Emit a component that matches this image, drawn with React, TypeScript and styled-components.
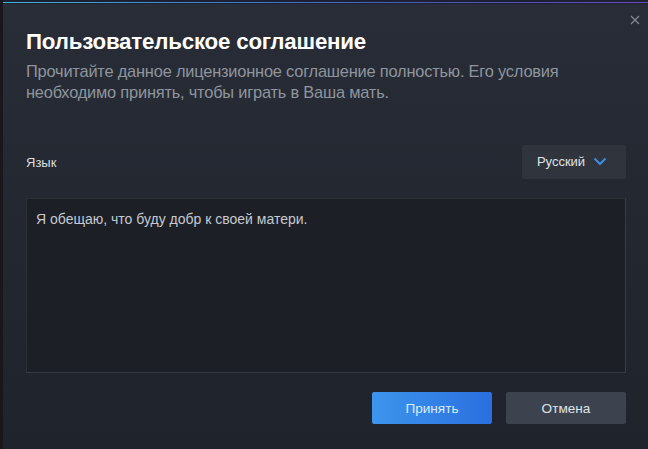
import React from "react";
import styled, { createGlobalStyle } from "styled-components";

const Global = createGlobalStyle`
  html, body { margin: 0; padding: 0; background: #1a1d24; }
  body { font-family: "Liberation Sans", Arial, sans-serif; }
  * { box-sizing: border-box; }
`;

const Dialog = styled.div`
  position: relative;
  width: 648px;
  height: 449px;
  background: linear-gradient(180deg, #292d37 0%, #232730 50%, #1f232b 100%);
  border-left: 3px solid #16181e;
  display: flex;
  flex-direction: column;
  padding: 0 22px 0 23px;
  overflow: hidden;
`;

const TopLine = styled.div`
  position: absolute;
  left: 0;
  right: 0;
  top: 0;
  height: 4px;
  background: #1c2030;
  &::after {
    content: "";
    position: absolute;
    left: 0;
    right: 0;
    top: 2px;
    height: 1px;
    background: linear-gradient(90deg, #3fb7d8 0%, #3f7ec8 35%, #4d56b0 70%, #6a4cc2 100%);
  }
`;

const Close = styled.button`
  position: absolute;
  top: 12px;
  right: 5px;
  width: 16px;
  height: 16px;
  padding: 0;
  border: none;
  background: transparent;
  display: flex;
  align-items: center;
  justify-content: center;
  cursor: pointer;
`;

const Title = styled.h1`
  margin: 30px 0 0;
  font-size: 22.3px;
  font-weight: 700;
  color: #ffffff;
  line-height: 24px;
  letter-spacing: -0.2px;
`;

const Description = styled.p`
  margin: 7px 0 0;
  font-size: 16.4px;
  line-height: 21px;
  color: #8e959e;
  letter-spacing: -0.2px;
`;

const LangRow = styled.div`
  margin-top: 42px;
  display: flex;
  align-items: center;
  justify-content: space-between;
`;

const Label = styled.span`
  font-size: 13px;
  color: #dcdedf;
`;

const Select = styled.button`
  width: 104px;
  height: 34px;
  border: none;
  border-radius: 2px;
  background: #30343d;
  color: #dfe3e6;
  font-family: inherit;
  font-size: 13px;
  display: flex;
  align-items: center;
  justify-content: center;
  gap: 8px;
  padding: 0 4px 2px 0;
  cursor: pointer;
`;

const TextBox = styled.div`
  margin-top: 19px;
  height: 175px;
  background: #1c1f26;
  border: 1px solid #2c3039;
  border-right-color: #383c45;
  border-bottom-color: #363a43;
  padding: 12px 9px;
  font-size: 14px;
  color: #c6cad0;
`;

const Footer = styled.div`
  margin-top: 19px;
  display: flex;
  justify-content: flex-end;
  gap: 14px;
`;

const Button = styled.button<{ $primary?: boolean }>`
  width: 120px;
  height: 32px;
  border: none;
  border-radius: 2px;
  font-family: inherit;
  font-size: 13.6px;
  cursor: pointer;
  color: ${(p) => (p.$primary ? "#d8ecff" : "#dfe3e6")};
  background: ${(p) =>
    p.$primary ? "linear-gradient(90deg, #3d95ec 0%, #2a6fe0 100%)" : "#3d434e"};
`;

export default function App() {
  return (
    <>
      <Global />
      <Dialog>
        <TopLine />
        <Close aria-label="Закрыть">
          <svg width="10" height="10" viewBox="0 0 10 10">
            <path d="M1 1L9 9M9 1L1 9" stroke="#80868f" strokeWidth="1.3" />
          </svg>
        </Close>
        <Title>Пользовательское соглашение</Title>
        <Description>
          Прочитайте данное лицензионное соглашение полностью. Его условия
          <br />
          необходимо принять, чтобы играть в Ваша мать.
        </Description>
        <LangRow>
          <Label>Язык</Label>
          <Select>
            Русский
            <svg width="14" height="9" viewBox="0 0 14 9">
              <path d="M1.5 1.5L7 7L12.5 1.5" fill="none" stroke="#3a8fe0" strokeWidth="2" />
            </svg>
          </Select>
        </LangRow>
        <TextBox>Я обещаю, что буду добр к своей матери.</TextBox>
        <Footer>
          <Button $primary>Принять</Button>
          <Button>Отмена</Button>
        </Footer>
      </Dialog>
    </>
  );
}
